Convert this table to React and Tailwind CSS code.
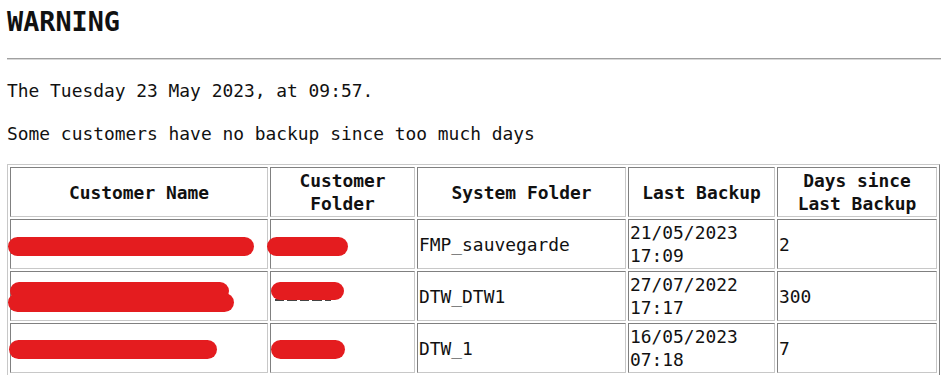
import React from "react";

const mono = { fontFamily: '"DejaVu Sans Mono", "Liberation Mono", monospace' };

function Bar({ className }) {
  return <div className={`absolute rounded-full bg-[#e41c1f] ${className}`} />;
}

const thCls =
  "border border-t-[#808080] border-l-[#808080] border-r-[#c8c8c8] border-b-[#c8c8c8] p-[1px] text-center align-middle font-bold leading-[23px] h-[50px]";
const tdCls =
  "relative border border-t-[#808080] border-l-[#808080] border-r-[#c8c8c8] border-b-[#c8c8c8] p-[1px] text-left align-middle font-normal leading-[23px] h-[50px]";

export default function App() {
  return (
    <div className="bg-white min-h-[375px] pl-[7px] pr-[4px] text-[#111] text-[17.9px]" style={mono}>
      <h1 className="pt-[6px] text-[26.8px] font-bold leading-[32px]">WARNING</h1>
      <div className="mt-[20px] h-0 border-t border-b border-t-[#a0a0a0] border-b-[#d8d8d8]" />
      <p className="mt-[19px] leading-[23px]">The Tuesday 23 May 2023, at 09:57.</p>
      <p className="mt-[20px] leading-[23px]">Some customers have no backup since too much days</p>
      <table className="mt-[19px] table-fixed border-separate border-spacing-[2px] border border-t-[#c8c8c8] border-l-[#c8c8c8] border-r-[#808080] border-b-[#808080] w-[933px]">
        <thead>
          <tr>
            <th className={`${thCls} w-[258px]`}>Customer Name</th>
            <th className={`${thCls} w-[145px]`}>Customer Folder</th>
            <th className={`${thCls} w-[209px]`}>System Folder</th>
            <th className={`${thCls} w-[147px]`}>Last Backup</th>
            <th className={`${thCls} w-[160px]`}>Days since Last Backup</th>
          </tr>
        </thead>
        <tbody>
          <tr>
            <td className={tdCls}>
              <Bar className="left-[-3px] top-[17px] w-[246px] h-[19px]" />
            </td>
            <td className={tdCls}>
              <Bar className="left-[-4px] top-[17px] w-[81px] h-[19px]" />
            </td>
            <td className={tdCls}>FMP_sauvegarde</td>
            <td className={tdCls}>21/05/2023 17:09</td>
            <td className={tdCls}>2</td>
          </tr>
          <tr>
            <td className={tdCls}>
              <Bar className="left-[-1px] top-[10px] w-[219px] h-[18px]" />
              <Bar className="left-[-3px] top-[21px] w-[226px] h-[19px]" />
            </td>
            <td className={tdCls}>
              <div className="absolute left-[4px] top-[27px] flex gap-[3px]">
                <div className="w-[9px] h-[2px] bg-[#444]" />
                <div className="w-[10px] h-[2px] bg-[#444]" />
                <div className="w-[9px] h-[2px] bg-[#444]" />
                <div className="w-[10px] h-[2px] bg-[#444]" />
                <div className="w-[6px] h-[2px] bg-[#444]" />
              </div>
              <Bar className="left-0 top-[10px] w-[73px] h-[18px]" />
            </td>
            <td className={tdCls}>DTW_DTW1</td>
            <td className={tdCls}>27/07/2022 17:17</td>
            <td className={tdCls}>300</td>
          </tr>
          <tr>
            <td className={tdCls}>
              <Bar className="left-[-2px] top-[16px] w-[208px] h-[19px]" />
            </td>
            <td className={tdCls}>
              <Bar className="left-0 top-[16px] w-[74px] h-[19px]" />
            </td>
            <td className={tdCls}>DTW_1</td>
            <td className={tdCls}>16/05/2023 07:18</td>
            <td className={tdCls}>7</td>
          </tr>
        </tbody>
      </table>
    </div>
  );
}
